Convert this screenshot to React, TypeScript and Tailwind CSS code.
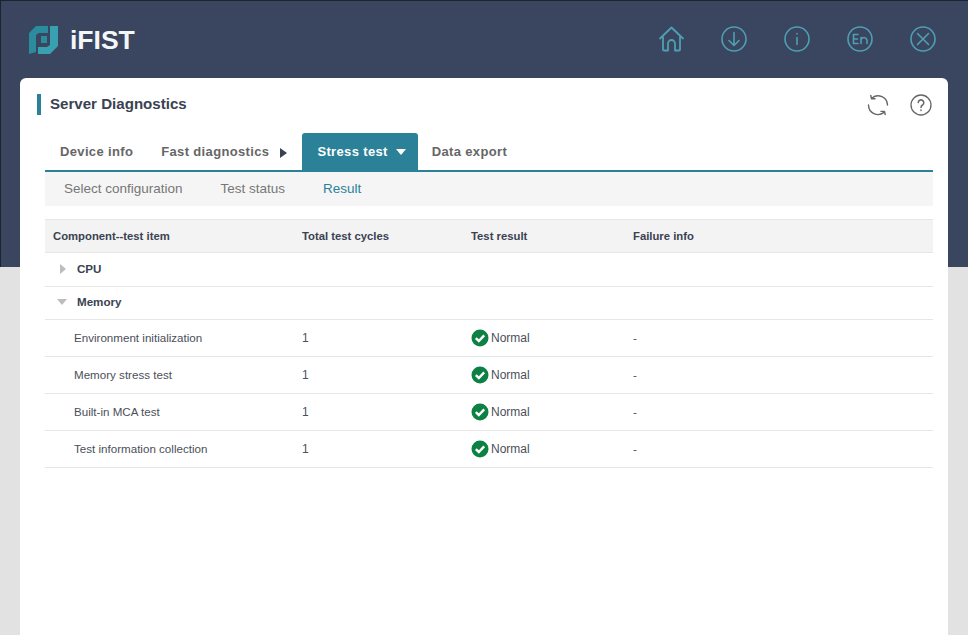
const TABS = ["Select configuration", "Test status", "Result"];

const ROWS = [
    "Environment initialization",
    "Memory stress test",
    "Built-in MCA test",
    "Test information collection",
];

const Logo = () => (
    <svg width="30" height="30" viewBox="0 0 30 30">
        <path d="M0 8L7 1H19V8H10L7 10V27L0 29Z" fill="#2b8c9e" />
        <path d="M21 1H29V21L21 29H9V22H18L21 20Z" fill="#38a0b0" />
        <path d="M12 11H18V18H12Z" fill="#2b8c9e" />
    </svg>
);

const HeaderIcon = ({ children }: { children: React.ReactNode }) => (
    <svg width="26" height="26" viewBox="0 0 26 26" fill="none" stroke="#4f9fb3" strokeWidth="1.6" strokeLinecap="round" strokeLinejoin="round">
        {children}
    </svg>
);

const CheckIcon = () => (
    <svg width="18" height="18" viewBox="0 0 18 18">
        <circle cx="9" cy="9" r="8.5" fill="#0d8043" />
        <path d="M4.8 9.2L7.8 12L13.2 6.4" fill="none" stroke="#fff" strokeWidth="2.4" />
    </svg>
);

const COLS = "grid grid-cols-[249px_169px_162px_1fr] items-center";

export default function App() {
    return (
        <div className="h-[635px] overflow-hidden bg-[#e2e2e2] font-['Liberation_Sans',sans-serif]">
            <header className="flex h-[267px] items-start justify-between border-t border-l border-[#1c2230] bg-[#3a4660] pl-7 pr-[32px] pt-6">
                <div className="flex items-center gap-[11px]">
                    <Logo />
                    <span className="text-[26.5px] font-bold leading-[30px] text-[#f4f6f8]">iFIST</span>
                </div>
                <div className="mt-[1px] flex gap-[37px]">
                    <HeaderIcon>
                        <g transform="translate(1.5 0)" strokeWidth="1.8">
                            <path d="M0.5 12.5L12 1.5L23.5 12.5M3.5 10.5V23.5A1 1 0 0 0 4.5 24.5H8.5V17.5A3.5 3.5 0 0 1 15.5 17.5V24.5H19.5A1 1 0 0 0 20.5 23.5V10.5" />
                        </g>
                    </HeaderIcon>
                    <HeaderIcon>
                        <circle cx="13" cy="13" r="12" />
                        <path d="M13 6.5V19M8 14.5L13 19.5L18 14.5" />
                    </HeaderIcon>
                    <HeaderIcon>
                        <circle cx="13" cy="13" r="12" />
                        <path d="M13 11.5V18.5M13 7.5V8" />
                    </HeaderIcon>
                    <HeaderIcon>
                        <circle cx="13" cy="13" r="12" />
                        <path d="M11 8.5H6.5V17.5H11M6.5 13H10.5M14 17.5V11.5M14 13.5Q15 11.5 17 11.5T20 14V17.5" />
                    </HeaderIcon>
                    <HeaderIcon>
                        <circle cx="13" cy="13" r="12" />
                        <path d="M7.5 7.5L18.5 18.5M18.5 7.5L7.5 18.5" />
                    </HeaderIcon>
                </div>
            </header>

            <main className="mx-5 -mt-[189px] h-[600px] w-[928px] rounded-t-[6px] bg-white">
                <div className="flex h-[55px] items-center justify-between pb-[3px] pl-[17px] pr-[16px] pt-[1px]">
                    <div className="flex items-center gap-[9px]">
                        <span className="h-[21px] w-1 bg-[#2b8198]"></span>
                        <h1 className="text-[15.1px] font-bold text-[#3a4252]">Server Diagnostics</h1>
                    </div>
                    <div className="flex items-center gap-[21px]">
                        <svg width="22" height="22" viewBox="0 0 22 22" fill="none" stroke="#666" strokeWidth="1.4" strokeLinecap="round" strokeLinejoin="round">
                            <path d="M5 4A9.5 9.5 0 0 1 20.5 11M1.5 11A9.5 9.5 0 0 0 17 18.4" />
                            <path d="M3.8 1.5L4.5 4.8H8M18.2 20.5L17.5 17.4H14" />
                        </svg>
                        <svg width="22" height="22" viewBox="0 0 22 22" fill="none" stroke="#666" strokeWidth="1.3" strokeLinecap="round">
                            <circle cx="11" cy="11" r="10" />
                            <path d="M8.2 8.6A2.8 2.8 0 1 1 12.6 11C11.4 11.7 11 12.2 11 13.5M11 16V16.4" strokeWidth="1.5" />
                        </svg>
                    </div>
                </div>

                <div className="mx-[25px] w-[888px]">
                    <div className="flex h-[39px] items-stretch border-b-2 border-[#2b8198] text-[13px] font-bold tracking-[0.35px] text-[#666]">
                        <span className="flex items-center pl-[15px] pr-[28px]">Device info</span>
                        <span className="flex items-center gap-[11px] pr-[15px]">
                            Fast diagnostics
                            <span className="mt-[3px] border-y-[5px] border-l-[7px] border-y-transparent border-l-[#3a4252]"></span>
                        </span>
                        <span className="flex items-center gap-[8px] rounded-t-[3px] bg-[#2b8198] pl-[15px] pr-[12px] text-white">
                            Stress test
                            <span className="border-x-[5px] border-t-[6px] border-x-transparent border-t-white"></span>
                        </span>
                        <span className="flex items-center pl-[14px]">Data export</span>
                    </div>

                    <div className="flex h-[34px] items-center gap-[38px] bg-[#f5f5f5] pl-[19px] text-[13.5px] text-[#777]">
                        {TABS.map((tab) => (
                            <span key={tab} className={tab === "Result" ? "text-[#2b8198]" : ""}>
                                {tab}
                            </span>
                        ))}
                    </div>

                    <div className="mt-[13px] text-[11.6px] text-[#4a4f5a]">
                        <div className={`${COLS} h-[34px] border-y border-[#e6e6e6] bg-[#f3f3f3] pl-2 text-[11.3px] font-bold text-[#3a4252]`}>
                            <span>Component--test item</span>
                            <span>Total test cycles</span>
                            <span>Test result</span>
                            <span>Failure info</span>
                        </div>
                        <div className="flex h-[34px] items-center border-b border-[#e6e6e6] pb-[2px] pl-[15px] font-bold text-[#3a4252]">
                            <span className="border-y-[5px] border-l-[6px] border-y-transparent border-l-[#bdbdbd]"></span>
                            <span className="ml-[11px]">CPU</span>
                        </div>
                        <div className="flex h-[33px] items-center border-b border-[#e6e6e6] pb-[2px] pl-3 font-bold text-[#3a4252]">
                            <span className="border-x-[5px] border-t-[6px] border-x-transparent border-t-[#bdbdbd]"></span>
                            <span className="ml-[10px]">Memory</span>
                        </div>
                        {ROWS.map((row) => (
                            <div key={row} className={`${COLS} h-[37px] border-b border-[#e6e6e6] pb-[1px] pl-2`}>
                                <span className="pl-[21px]">{row}</span>
                                <span className="text-xs">1</span>
                                <span className="flex items-center gap-[2px] text-xs">
                                    <CheckIcon />
                                    Normal
                                </span>
                                <span>-</span>
                            </div>
                        ))}
                    </div>
                </div>
            </main>
        </div>
    );
}
